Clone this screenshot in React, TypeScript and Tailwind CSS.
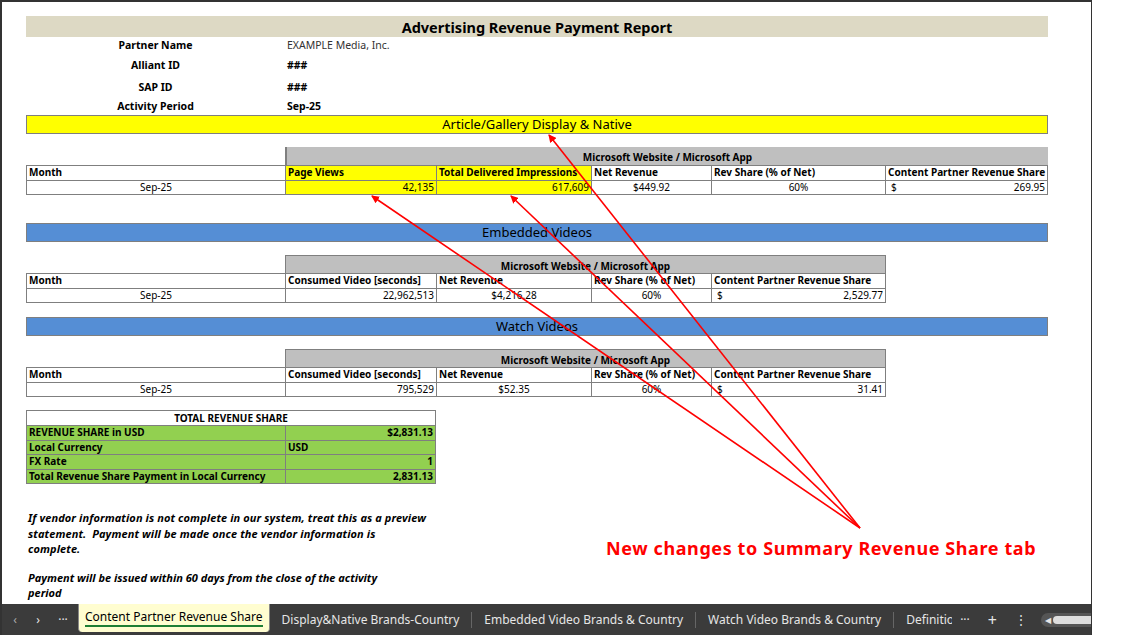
import React from "react";

const F = { fontFamily: '"Noto Sans", "Liberation Sans", sans-serif' };

function Cell({ w, children, cls = "" }: { w: string; children?: React.ReactNode; cls?: string }) {
  return <div className={`${w} shrink-0 border-r border-[#7f7f7f] px-[2px] leading-[13.5px] overflow-hidden whitespace-nowrap ${cls}`}>{children}</div>;
}

function Banner({ text, bg, mt }: { text: string; bg: string; mt: string }) {
  return (
    <div className={`${mt} ml-[26px] w-[1022px] h-[19px] ${bg} border border-[#7f7f7f] text-[13px] leading-[17px] text-center text-black`}>{text}</div>
  );
}

export default function App() {
  const hdr = "font-bold text-[10px]";
  return (
    <div style={F} className="relative w-[1125px] h-[635px] bg-white overflow-hidden text-black">
      <div className="absolute left-0 top-0 w-[1092px] h-[635px] border-l-2 border-t-2 border-r border-[#333]" />
      <div className="flex flex-col w-[1092px] h-[635px]">
        <div className="flex-1 pt-[16px]">
          <div className="ml-[26px] w-[1022px] h-[21px] bg-[#ddd9c4] text-center font-bold text-[14.5px] leading-[23px]">Advertising Revenue Payment Report</div>
          <div className="ml-[26px] flex flex-col text-[10.5px]">
            {[["Partner Name", "EXAMPLE Media, Inc.", false, "h-[18px]"], ["Alliant ID", "###", true, "h-[22px]"], ["SAP ID", "###", true, "h-[22px]"], ["Activity Period", "Sep-25", true, "h-[16px]"]].map(([a, b, bold, h]) => (
              <div key={a as string} className={`flex items-center ${h}`}>
                <div className="w-[259px] text-center font-bold">{a}</div>
                <div className={`pl-[2px] ${bold ? "font-bold" : "text-[#333]"}`}>{b}</div>
              </div>
            ))}
          </div>
          <Banner text="Article/Gallery Display & Native" bg="bg-[#ffff00]" mt="mt-0" />
          <div className="ml-[285px] mt-[13px] w-[763px] h-[18px] bg-[#bfbfbf] border-l-2 border-[#7f7f7f] text-center font-bold text-[10px] leading-[20px]">Microsoft Website / Microsoft App</div>
          <div className="ml-[26px] w-[1022px] border border-[#7f7f7f] text-[10px]">
            <div className={`flex border-b border-[#7f7f7f] ${hdr}`}>
              <Cell w="w-[259px]">Month</Cell>
              <Cell w="w-[151px]" cls="bg-[#ffff00]">Page Views</Cell>
              <Cell w="w-[155px]" cls="bg-[#ffff00]">Total Delivered Impressions</Cell>
              <Cell w="w-[120px]">Net Revenue</Cell>
              <Cell w="w-[174px]">Rev Share (% of Net)</Cell>
              <Cell w="w-[161px]" cls="border-r-0">Content Partner Revenue Share</Cell>
            </div>
            <div className="flex">
              <Cell w="w-[259px]" cls="text-center">Sep-25</Cell>
              <Cell w="w-[151px]" cls="bg-[#ffff00] text-right">42,135</Cell>
              <Cell w="w-[155px]" cls="bg-[#ffff00] text-right">617,609</Cell>
              <Cell w="w-[120px]" cls="text-center">$449.92</Cell>
              <Cell w="w-[174px]" cls="text-center">60%</Cell>
              <Cell w="w-[161px]" cls="border-r-0 flex justify-between pl-[5px]"><span>$</span><span>269.95</span></Cell>
            </div>
          </div>
          {[["Embedded Videos", "22,962,513", "$4,216.28", "2,529.77", "mt-[28px]"], ["Watch Videos", "795,529", "$52.35", "31.41", "mt-[14px]"]].map(([t, c, n, s, mt]) => (
            <div key={t}>
              <Banner text={t} bg="bg-[#558ed5]" mt={mt} />
              <div className="ml-[285px] mt-[13px] w-[601px] h-[18px] bg-[#bfbfbf] border-l border-t border-r border-[#7f7f7f] text-center font-bold text-[10px] leading-[20px]">Microsoft Website / Microsoft App</div>
              <div className="ml-[26px] w-[860px] border border-[#7f7f7f] text-[10px]">
                <div className={`flex border-b border-[#7f7f7f] ${hdr}`}>
                  <Cell w="w-[259px]">Month</Cell>
                  <Cell w="w-[151px]">Consumed Video [seconds]</Cell>
                  <Cell w="w-[155px]">Net Revenue</Cell>
                  <Cell w="w-[120px]">Rev Share (% of Net)</Cell>
                  <Cell w="w-[173px]" cls="border-r-0">Content Partner Revenue Share</Cell>
                </div>
                <div className="flex">
                  <Cell w="w-[259px]" cls="text-center">Sep-25</Cell>
                  <Cell w="w-[151px]" cls="text-right">{c}</Cell>
                  <Cell w="w-[155px]" cls="text-center">{n}</Cell>
                  <Cell w="w-[120px]" cls="text-center">60%</Cell>
                  <Cell w="w-[173px]" cls="border-r-0 flex justify-between pl-[5px]"><span>$</span><span>{s}</span></Cell>
                </div>
              </div>
            </div>
          ))}
          <div className="ml-[26px] mt-[13px] w-[410px] border border-[#7f7f7f] text-[10px] font-bold">
            <div className="text-center leading-[14px] border-b border-[#7f7f7f]">TOTAL REVENUE SHARE</div>
            {[["REVENUE SHARE in USD", "$2,831.13", "text-right"], ["Local Currency", "USD", ""], ["FX Rate", "1", "text-right"], ["Total Revenue Share Payment in Local Currency", "2,831.13", "text-right"]].map(([a, b, c], i) => (
              <div key={a} className={`flex bg-[#92d050] ${i < 3 ? "border-b border-[#7f7f7f]" : ""}`}>
                <Cell w="w-[259px]">{a}</Cell>
                <div className={`flex-1 px-[2px] leading-[13.5px] ${c}`}>{b}</div>
              </div>
            ))}
          </div>
          <div className="ml-[28px] mt-[26px] w-[400px] text-[11px] font-bold italic leading-[15.5px] tracking-[0.1px]">
            If vendor information is not complete in our system, treat this as a preview statement.&nbsp; Payment will be made once the vendor information is complete.
          </div>
          <div className="ml-[28px] mt-[13px] w-[380px] text-[11px] font-bold italic leading-[15.5px]">
            Payment will be issued within 60 days from the close of the activity period
          </div>
        </div>
        <div className="h-[31px] bg-[#3b3b3b] flex items-center text-[12px] text-[#e6e6e6] ml-[2px] mr-[1px]">
          <span className="w-[26px] text-center text-[#aaa]">‹</span>
          <span className="w-[20px] text-center">›</span>
          <span className="w-[30px] text-center">···</span>
          <div className="h-[28px] -mt-[3px] bg-[#fffdd0] text-black px-[6px] rounded-b flex flex-col justify-center border-x border-[#888]">
            <span className="border-b-2 border-[#1e7e34] leading-[16px]">Content Partner Revenue Share</span>
          </div>
          {["Display&Native Brands-Country", "Embedded Video Brands & Country", "Watch Video Brands & Country"].map((t) => (
            <React.Fragment key={t}>
              <span className="px-[12px]">{t}</span>
              <span className="w-px h-[16px] bg-[#666]" />
            </React.Fragment>
          ))}
          <span className="ml-[12px] w-[46px] overflow-hidden whitespace-nowrap">Definitions</span>
          <span className="px-[8px]">···</span>
          <span className="px-[10px] text-[16px]">+</span>
          <span className="px-[8px]">⋮</span>
          <div className="ml-[6px] flex-1 h-[14px] rounded-l-full bg-[#555] flex items-center pl-[4px] gap-[2px]">
            <span className="text-[8px]">◀</span>
            <div className="flex-1 h-[8px] rounded-l-full bg-[#ddd]" />
          </div>
        </div>
      </div>
      <div className="absolute left-[606px] top-[535px] text-[18px] font-bold text-[#ff0000] whitespace-nowrap tracking-[0.6px]">New changes to Summary Revenue Share tab</div>
      <svg className="absolute left-0 top-0 pointer-events-none" width="1125" height="635">
        <defs>
          <marker id="ah" markerWidth="8" markerHeight="8" refX="7" refY="4" orient="auto" markerUnits="userSpaceOnUse">
            <path d="M0,0 L8,4 L0,8 z" fill="#ff0000" />
          </marker>
        </defs>
        {[[549, 135], [511, 196], [372, 196]].map(([x, y]) => (
          <line key={x} x1="860" y1="528" x2={x} y2={y} stroke="#ff0000" strokeWidth="1.6" markerEnd="url(#ah)" />
        ))}
      </svg>
    </div>
  );
}
